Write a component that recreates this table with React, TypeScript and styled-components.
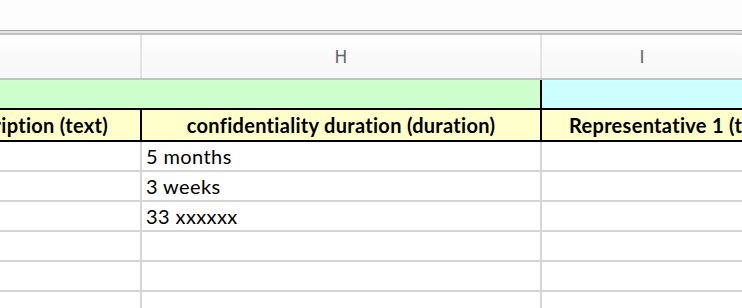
import React from 'react'
import styled, { createGlobalStyle } from 'styled-components'

const GlobalStyle = createGlobalStyle`
  html, body {
    margin: 0;
    padding: 0;
    background: #ffffff;
  }
  body {
    width: 742px;
    height: 308px;
    overflow: hidden;
  }
`

const COLS = '142px 400px 1fr'

const Sheet = styled.div`
  display: flex;
  flex-direction: column;
  width: 742px;
  height: 308px;
  overflow: hidden;
  background: #fff;
`

const Toolbar = styled.div`
  height: 30px;
  background: #fdfdfd;
  flex-shrink: 0;
`

const ToolbarEdge = styled.div`
  height: 5px;
  flex-shrink: 0;
  background: linear-gradient(
    to bottom,
    #a8a8a8 0px,
    #a8a8a8 1px,
    #e4e4e4 1px,
    #e4e4e4 3px,
    #bdbdbd 3px,
    #c6c6c6 5px
  );
`

const ColumnHeaderRow = styled.div`
  display: grid;
  grid-template-columns: ${COLS};
  height: 43px;
  flex-shrink: 0;
  border-bottom: 2px solid #c2c2c2;
  background: linear-gradient(to bottom, #fefefe, #f6f6f6);
`

const ColumnLetter = styled.div<{ $last?: boolean }>`
  display: flex;
  align-items: center;
  justify-content: center;
  border-right: ${({ $last }) => ($last ? 'none' : '2px solid #e2e2e2')};
  font-family: 'DejaVu Sans', 'Liberation Sans', sans-serif;
  font-size: 17px;
  color: #666666;
  padding-top: 1px;
`

const GroupRow = styled.div`
  display: grid;
  grid-template-columns: 542px 1fr;
  height: 28px;
  flex-shrink: 0;
  border-bottom: 2px solid #000;
`

const GroupCell = styled.div<{ $bg: string; $last?: boolean }>`
  background: ${({ $bg }) => $bg};
  border-right: ${({ $last }) => ($last ? 'none' : '2px solid #000')};
`

const FieldRow = styled.div`
  display: grid;
  grid-template-columns: ${COLS};
  height: 30px;
  flex-shrink: 0;
  border-bottom: 2px solid #000;
  background: #ffffcc;
`

const FieldCell = styled.div<{ $align: 'start' | 'center' | 'end'; $last?: boolean }>`
  display: flex;
  align-items: center;
  justify-content: ${({ $align }) => ($align === 'start' ? 'flex-start' : $align === 'end' ? 'flex-end' : 'center')};
  overflow: hidden;
  white-space: nowrap;
  padding: ${({ $align }) => ($align === 'end' ? '0 32px 0 0' : $align === 'start' ? '0 0 0 27px' : '0')};
  border-right: ${({ $last }) => ($last ? 'none' : '2px solid #000')};
  font-family: Lato, 'Open Sans', sans-serif;
  font-weight: 700;
  font-size: 20px;
  letter-spacing: 0.3px;
  color: #000;
`

const DataRow = styled.div`
  display: grid;
  grid-template-columns: ${COLS};
  height: 28px;
  flex-shrink: 0;
  border-bottom: 2px solid #d5d5d5;
`

const DataCell = styled.div<{ $last?: boolean }>`
  display: flex;
  align-items: center;
  padding-left: 4px;
  white-space: nowrap;
  overflow: hidden;
  border-right: ${({ $last }) => ($last ? 'none' : '2px solid #d5d5d5')};
  font-family: Lato, 'Open Sans', sans-serif;
  font-size: 20px;
  letter-spacing: 0.4px;
  color: #000;
`

const durations = ['5 months', '3 weeks', '33 xxxxxx', '', '', '']

export default function App() {
  return (
    <>
      <GlobalStyle />
      <Sheet>
        <Toolbar />
        <ToolbarEdge />
        <ColumnHeaderRow>
          <ColumnLetter />
          <ColumnLetter>H</ColumnLetter>
          <ColumnLetter $last>I</ColumnLetter>
        </ColumnHeaderRow>
        <GroupRow>
          <GroupCell $bg="#ccffcc" />
          <GroupCell $bg="#ccffff" $last />
        </GroupRow>
        <FieldRow>
          <FieldCell $align="end">Description (text)</FieldCell>
          <FieldCell $align="center">confidentiality duration (duration)</FieldCell>
          <FieldCell $align="start" $last>Representative 1 (text)</FieldCell>
        </FieldRow>
        {durations.map((d, i) => (
          <DataRow key={i}>
            <DataCell />
            <DataCell>{d}</DataCell>
            <DataCell $last />
          </DataRow>
        ))}
      </Sheet>
    </>
  )
}
